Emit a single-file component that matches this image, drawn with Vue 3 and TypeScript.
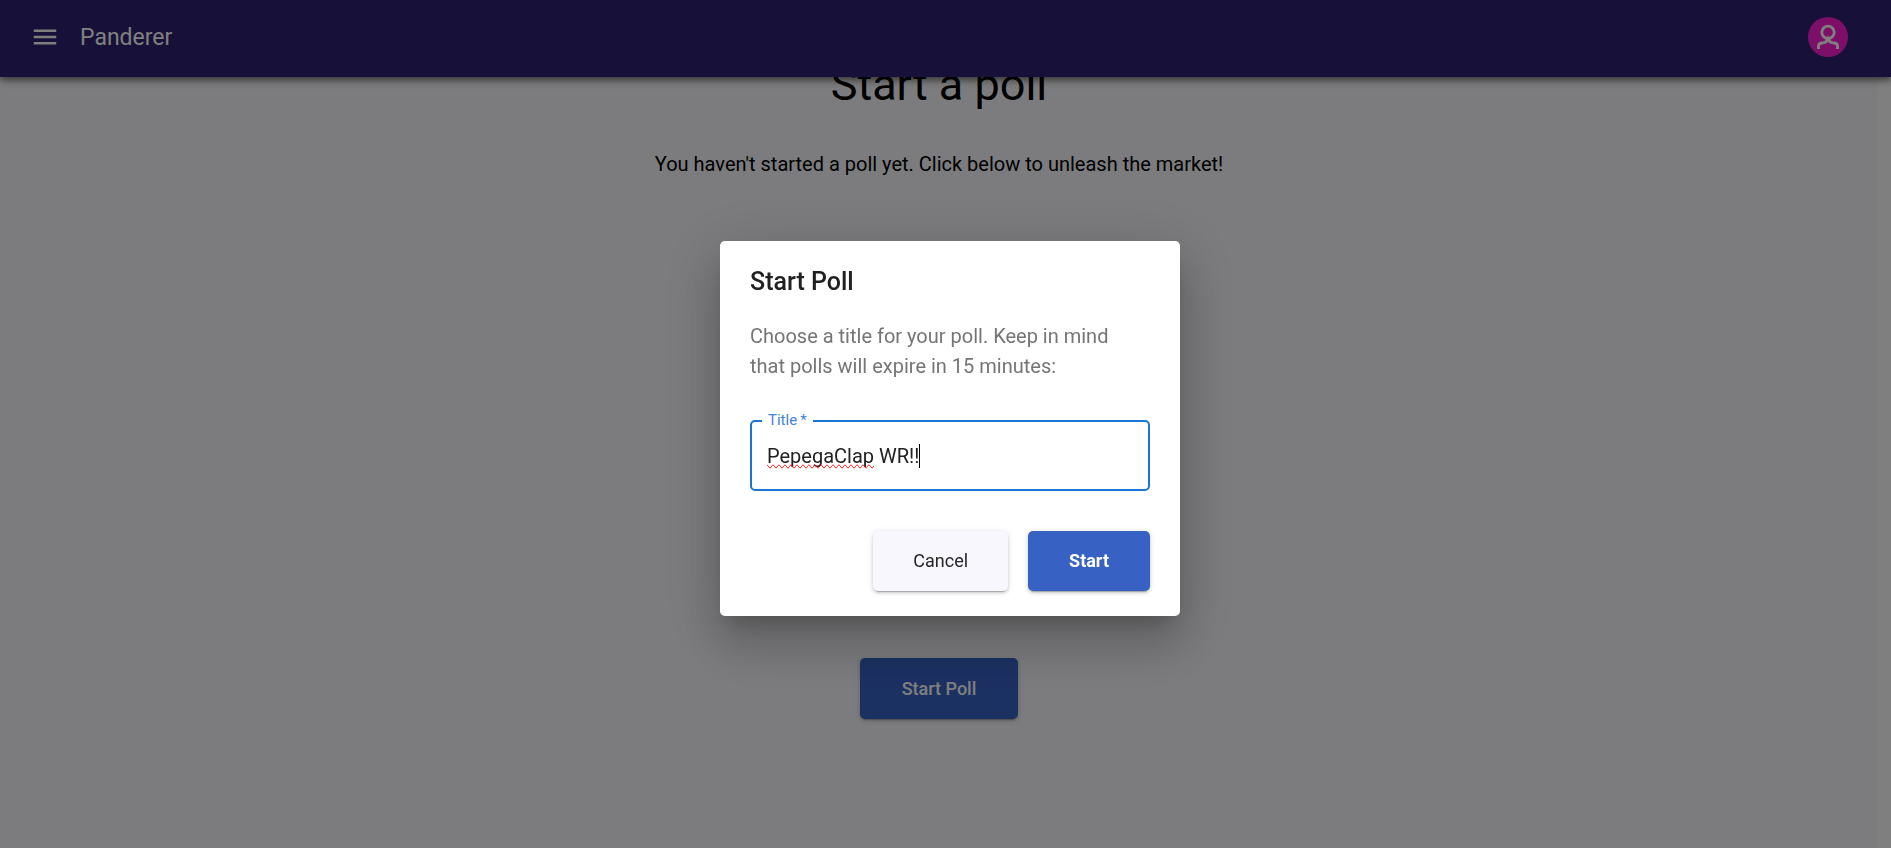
<script setup lang="ts">
import { computed, ref } from 'vue'

const title = ref('PepegaClap WR!!')
const firstWord = computed(() => title.value.split(' ')[0])
const remainder = computed(() => title.value.slice(firstWord.value.length))
</script>

<template>
  <div class="page">
    <header class="bar">
      <button class="icon-button" type="button" aria-label="Open menu">
        <svg viewBox="0 0 24 24" width="30" height="30" aria-hidden="true">
          <path d="M3 18h18v-2H3v2zm0-5h18v-2H3v2zm0-7v2h18V6H3z" fill="currentColor" />
        </svg>
      </button>
      <a class="brand" href="#">Panderer</a>
      <button class="avatar" type="button" aria-label="Account">
        <svg viewBox="0 0 40 40" width="40" height="40" aria-hidden="true">
          <g fill="none" stroke="currentColor" stroke-width="2.9">
            <circle cx="20" cy="15.3" r="6.2" />
            <path d="M10.5 32v-2.6q0-3.4 3.4-3.4c3 0 5-1.3 6.1-4c1.1 2.7 3.1 4 6.1 4q3.4 0 3.4 3.4V32" />
          </g>
        </svg>
      </button>
    </header>

    <main class="content">
      <h1>Start a poll</h1>
      <p class="lead">You haven't started a poll yet. Click below to unleash the market!</p>
      <button class="button primary launch" type="button">Start Poll</button>
    </main>

    <div class="backdrop">
      <form class="dialog" role="dialog" aria-labelledby="dialog-title" @submit.prevent>
        <h2 id="dialog-title">Start Poll</h2>
        <p class="hint">Choose a title for your poll. Keep in mind that polls will expire in 15 minutes:</p>
        <div class="field">
          <label for="poll-title">Title&#8201;*</label>
          <input id="poll-title" v-model="title" type="text" required spellcheck="false" autocomplete="off" />
          <div class="marks" aria-hidden="true"><span class="misspelt">{{ firstWord }}</span><span class="tail">{{ remainder }}</span></div>
        </div>
        <div class="actions">
          <button class="button plain" type="button">Cancel</button>
          <button class="button primary strong" type="submit">Start</button>
        </div>
      </form>
    </div>
  </div>
</template>

<style>
body {
  margin: 0;
  background: #fff;
}
</style>

<style scoped>
.page {
  height: 100vh;
  overflow: hidden;
  box-sizing: border-box;
  font-family: Roboto, "Liberation Sans", sans-serif;
  font-size: 20px;
  line-height: 30px;
  color: #000;
}

button,
input {
  font: inherit;
  margin: 0;
  border: 0;
}

button {
  cursor: pointer;
}

.bar {
  position: relative;
  z-index: 1;
  display: flex;
  align-items: center;
  height: 77px;
  box-sizing: border-box;
  padding: 0 43px 3px 30px;
  background: #2e2070;
  color: #fff;
  box-shadow: 0 2px 5px rgba(0, 0, 0, 0.3), 0 5px 6px rgba(0, 0, 0, 0.2), 0 1px 12px rgba(0, 0, 0, 0.18);
}

.icon-button,
.avatar {
  display: flex;
  padding: 0;
  background: none;
  color: inherit;
}

.brand {
  margin-left: 20px;
  padding-top: 2px;
  color: inherit;
  font-size: 23px;
  text-decoration: none;
}

.avatar {
  margin-left: auto;
  border-radius: 50%;
  background: #fa1ed2;
}

.content {
  display: flex;
  flex-direction: column;
  align-items: center;
  min-height: calc(100vh - 77px);
  margin-right: 13px;
  background: #f8f8fc;
}

h1 {
  margin: -22px 0 0;
  font-size: 45px;
  font-weight: 400;
  line-height: 60px;
}

.lead {
  margin: 34px 0 0;
}

.button {
  min-height: 60px;
  padding: 0 40px;
  border-radius: 5px;
  font-size: 18px;
  box-shadow: 0 4px 1px -3px rgba(0, 0, 0, 0.2), 0 2px 3px rgba(0, 0, 0, 0.14), 0 1px 6px rgba(0, 0, 0, 0.12);
}

.primary {
  background: #3762c3;
  color: #fff;
  font-weight: 500;
}

.launch {
  height: 61px;
  margin-top: 479px;
  padding: 0 42px;
}

.strong {
  padding: 0 41px;
  font-weight: 700;
}

.plain {
  background: #f8f7fd;
  color: #262626;
}

.backdrop {
  position: fixed;
  inset: 0;
  z-index: 2;
  display: flex;
  align-items: center;
  justify-content: center;
  padding: 9px 0 0 9px;
  background: rgba(0, 0, 0, 0.5);
}

.dialog {
  width: 460px;
  box-sizing: border-box;
  padding: 21px 30px 25px;
  border-radius: 5px;
  background: #fff;
  box-shadow: 0 14px 19px -9px rgba(0, 0, 0, 0.2), 0 30px 48px 4px rgba(0, 0, 0, 0.14), 0 11px 58px 10px rgba(0, 0, 0, 0.12);
}

h2 {
  margin: 0;
  font-size: 25px;
  font-weight: 500;
  line-height: 40px;
  color: #212121;
}

.hint {
  margin: 19px 0 0;
  padding-right: 20px;
  color: #757575;
}

.field {
  position: relative;
  margin-top: 39px;
}

.field label {
  position: absolute;
  top: -10px;
  left: 12px;
  padding: 0 6px;
  background: #fff;
  color: #3f83d6;
  font-size: 15px;
  line-height: 20px;
}

.field input {
  display: block;
  width: 100%;
  height: 71px;
  box-sizing: border-box;
  padding: 0 15px;
  border: 2px solid #1976d2;
  border-radius: 5px;
  outline: none;
  background: #fff;
  color: #212121;
  caret-color: transparent;
}

.marks {
  position: absolute;
  top: 24px;
  left: 17px;
  line-height: 24px;
  white-space: pre;
  color: transparent;
  pointer-events: none;
}

.misspelt {
  text-decoration-line: spelling-error;
}

.tail {
  display: inline-block;
  border-right: 1px solid #000;
}

.actions {
  display: flex;
  justify-content: flex-end;
  gap: 20px;
  margin-top: 40px;
}
</style>
